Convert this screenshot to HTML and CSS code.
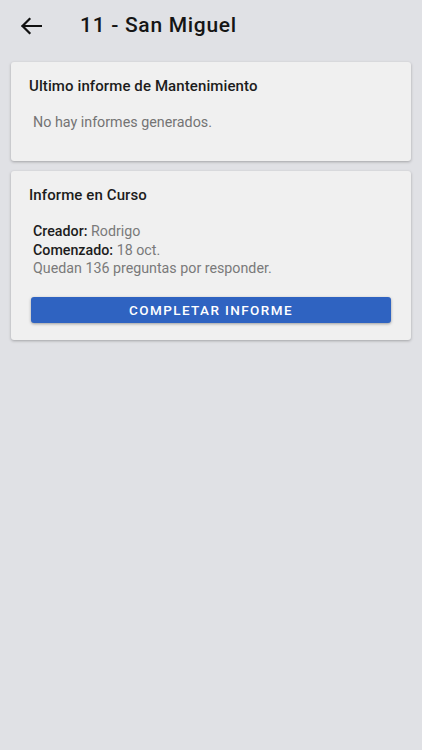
FILE: index.html
```html
<!DOCTYPE html>
<html lang="es">
<head>
<meta charset="utf-8">
<title>11 - San Miguel</title>
<link rel="stylesheet" href="styles.css">
</head>
<body>
<header class="appbar">
  <svg class="back" width="22" height="18" viewBox="0 0 22 18" aria-hidden="true">
    <path d="M21 9H2.5M9.5 2L2.5 9l7 7" fill="none" stroke="#111" stroke-width="2.2" stroke-linecap="square" stroke-linejoin="miter"/>
  </svg>
  <h1 class="title">11 - San Miguel</h1>
</header>
<main class="content">
  <section class="card card-last">
    <h2 class="card-title">Ultimo informe de Mantenimiento</h2>
    <p class="muted">No hay informes generados.</p>
  </section>
  <section class="card">
    <h2 class="card-title">Informe en Curso</h2>
    <div class="info">
      <p class="line"><b>Creador:</b> Rodrigo</p>
      <p class="line"><b>Comenzado:</b> 18 oct.</p>
      <p class="line">Quedan 136 preguntas por responder.</p>
    </div>
    <button class="btn">COMPLETAR INFORME</button>
  </section>
</main>
</body>
</html>
```
FILE: styles.css
```css
* { box-sizing: border-box; }
html, body { margin: 0; padding: 0; }
body {
  background: #e0e1e5;
  font-family: Roboto, "Liberation Sans", sans-serif;
  color: #1a1a1a;
  height: 750px;
}
.appbar {
  height: 50px;
  display: flex;
  align-items: center;
  padding-left: 20px;
}
.back { display: block; margin-top: 1px; }
.title {
  margin: 0 0 0 38px;
  font-size: 21px;
  font-weight: 500;
  letter-spacing: 0.7px;
  color: #151515;
}
.content {
  padding: 12px 11px 0;
  display: flex;
  flex-direction: column;
  gap: 10px;
}
.card {
  background: #f0f0f0;
  border-radius: 3px;
  box-shadow: 0 1px 3px rgba(0,0,0,0.28);
  padding: 14px 20px 17px 18px;
}
.card-last { padding-bottom: 30px; }
.card-title {
  margin: 0;
  font-size: 15px;
  line-height: 20px;
  font-weight: 500;
  letter-spacing: 0.1px;
  color: #1c1c1c;
}
.muted {
  margin: 17px 0 0 4px;
  font-size: 14.3px;
  line-height: 18px;
  color: #747474;
}
.info { margin: 17px 0 0 4px; }
.line {
  margin: 0;
  font-size: 14.25px;
  line-height: 18.5px;
  color: #7a7a7a;
}
.line b { color: #1c1c1c; font-weight: 500; }
.btn {
  display: block;
  width: 360px;
  margin: 19px 0 0 2px;
  height: 26px;
  border: none;
  border-radius: 3px;
  background: #2f63c1;
  color: #fff;
  font-family: Roboto, "Liberation Sans", sans-serif;
  font-size: 13.5px;
  font-weight: 500;
  letter-spacing: 1.4px;
  box-shadow: 0 1px 3px rgba(0,0,0,0.35);
  padding: 0;
}
```
